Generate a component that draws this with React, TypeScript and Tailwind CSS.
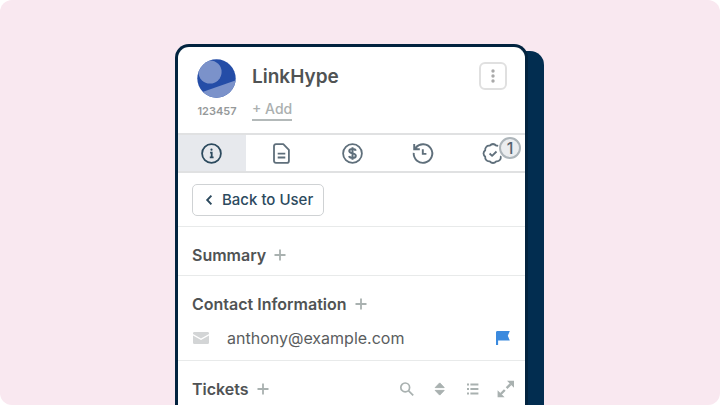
import type { ReactNode } from "react";
import { clsx } from "clsx";

function InfoIcon() {
  return (
    <svg viewBox="0 0 24 24" className="size-6" fill="none" stroke="currentColor" strokeWidth="1.8" aria-hidden="true">
      <circle cx="11.5" cy="12.5" r="9.4" />
      <path d="M10.1 11.7h1.6v4.6M9.8 16.3h3.8" />
      <circle cx="11.5" cy="8.7" r="1.1" fill="currentColor" stroke="none" />
    </svg>
  );
}

function DocumentIcon() {
  return (
    <svg viewBox="0 0 24 24" className="size-6" fill="none" stroke="currentColor" strokeWidth="1.8" strokeLinejoin="round" aria-hidden="true">
      <path d="M5.9 3.2h7.4l5.6 5.6v11.1a1.9 1.9 0 0 1-1.9 1.9H5.9A1.9 1.9 0 0 1 4 19.9V5.1a1.9 1.9 0 0 1 1.9-1.9Z" />
      <path d="M7.7 12.7h7.6M7.7 16.5h7.6" />
    </svg>
  );
}

function DollarIcon() {
  return (
    <svg viewBox="0 0 24 24" className="size-6" fill="none" stroke="currentColor" strokeWidth="1.8" aria-hidden="true">
      <circle cx="11.5" cy="12.5" r="9.4" />
      <path d="M14.7 9.7c-.3-1.1-1.5-1.7-3.2-1.7-1.9 0-3.2.8-3.2 2.1 0 3.1 6.5 1.4 6.5 4.6 0 1.4-1.4 2.2-3.3 2.2-1.8 0-3.1-.7-3.4-1.9M11.5 6.3v12.4" strokeWidth="2" />
    </svg>
  );
}

function HistoryIcon() {
  return (
    <svg viewBox="0 0 24 24" className="size-6" fill="none" stroke="currentColor" strokeWidth="1.9" aria-hidden="true">
      <path d="M1.7 11.9A9.3 9.3 0 1 0 3.8 6.6" />
      <path d="M2.2 3.1v5.2h5.6" />
      <path d="M2.2 4.4l4 4H2.2Z" fill="currentColor" stroke="none" />
      <path d="M10.8 8.3v4.6h3.6" />
    </svg>
  );
}

function BadgeCheckIcon() {
  return (
    <svg viewBox="0 0 24 24" className="size-6" fill="none" stroke="currentColor" strokeWidth="1.8" strokeLinejoin="round" aria-hidden="true">
      <g transform="translate(1 .5)">
        <path d="M12 2.5Q13.8 2.6 15.2 4.2Q17.4 3.9 18.7 5.3Q20.1 6.6 19.8 8.8Q21.4 10.2 21.5 12Q21.4 13.8 19.8 15.2Q20.1 17.4 18.7 18.7Q17.4 20.1 15.2 19.8Q13.8 21.4 12 21.5Q10.2 21.4 8.8 19.8Q6.6 20.1 5.3 18.7Q3.9 17.4 4.2 15.2Q2.6 13.8 2.5 12Q2.6 10.2 4.2 8.8Q3.9 6.6 5.3 5.3Q6.6 3.9 8.8 4.2Q10.2 2.6 12 2.5Z" />
        <path d="M8.6 12l2.5 2.4 4.4-4.4" />
      </g>
    </svg>
  );
}

function MailIcon() {
  return (
    <svg viewBox="0 0 18 14" className="h-3.5 w-[18px] text-[#d3d5d6]" fill="currentColor" aria-hidden="true">
      <path d="M2.5 1h13A1.4 1.4 0 0 1 17 2.4v.5L9 7.4 1 2.9v-.5A1.4 1.4 0 0 1 2.5 1Z" />
      <path d="M1 4.4l8 4.5 8-4.5v7.3a1.4 1.4 0 0 1-1.4 1.4H2.4A1.4 1.4 0 0 1 1 11.7Z" />
    </svg>
  );
}

function FlagIcon() {
  return (
    <svg viewBox="0 0 16 16" className="size-4 text-[#3b8ade]" fill="currentColor" aria-hidden="true">
      <path d="M1 2.4C1 1.6 1.6 1 2.4 1h12.4l-2 4.7 2 4.8H3.1V15H1Z" />
    </svg>
  );
}

function SearchIcon() {
  return (
    <svg viewBox="0 0 16 16" className="size-4" fill="none" stroke="currentColor" strokeWidth="1.7" aria-hidden="true">
      <circle cx="7.2" cy="6.4" r="4.4" />
      <path d="M10.4 9.6l4.8 4.8" />
    </svg>
  );
}

function SortIcon() {
  return (
    <svg viewBox="0 0 16 16" className="size-4" fill="currentColor" stroke="currentColor" strokeWidth="1" strokeLinejoin="round" aria-hidden="true">
      <path d="M8.7 1.9l4.5 4.7h-9ZM8.7 14.1l4.5-4.7h-9Z" />
    </svg>
  );
}

function ListIcon() {
  return (
    <svg viewBox="0 0 16 16" className="size-4" stroke="currentColor" strokeWidth="1.9" aria-hidden="true">
      <path d="M3 3.5h2M6.4 3.5h8M3 8h2M6.4 8h8M3 12.5h2M6.4 12.5h8" />
    </svg>
  );
}

function ExpandIcon() {
  return (
    <svg viewBox="0 0 18 18" className="size-[18px]" fill="currentColor" stroke="currentColor" aria-hidden="true">
      <path d="M9.6 8.2l4-4M7.8 10l-4 4" strokeWidth="2.4" />
      <path d="M10 .8h7v7ZM.6 17.2h7l-7-7Z" stroke="none" />
    </svg>
  );
}

const tabs = [
  { label: "Details", icon: <InfoIcon /> },
  { label: "Documents", icon: <DocumentIcon /> },
  { label: "Billing", icon: <DollarIcon /> },
  { label: "History", icon: <HistoryIcon /> },
  { label: "Tasks", icon: <BadgeCheckIcon />, count: 1 },
];

const ticketActions = [
  { label: "Search tickets", icon: <SearchIcon /> },
  { label: "Sort tickets", icon: <SortIcon /> },
  { label: "List view", icon: <ListIcon /> },
  { label: "Expand", icon: <ExpandIcon /> },
];

function SectionHeading({ title, children }: { title: string; children?: ReactNode }) {
  return (
    <div className="flex h-6 items-center gap-2">
      <h2 className="text-[16px] leading-6 font-semibold text-[#505354]">{title}</h2>
      <button type="button" aria-label={`Add to ${title}`} className="text-[#a9b1b0]">
        <svg viewBox="0 0 12 12" className="size-3" stroke="currentColor" strokeWidth="1.8" aria-hidden="true">
          <path d="M6 .5v11M.5 6h11" />
        </svg>
      </button>
      {children}
    </div>
  );
}

function CardHeader() {
  return (
    <header className="flex items-start gap-[15px] pt-3 pr-[18px] pb-3 pl-[19px]">
      <div className="flex w-10 flex-col items-center gap-1">
        <svg viewBox="0 0 40 40" className="size-10" aria-hidden="true">
          <defs>
            <clipPath id="avatar">
              <circle cx="19.5" cy="19.5" r="19.2" />
            </clipPath>
          </defs>
          <g clipPath="url(#avatar)">
            <rect width="40" height="40" fill="#244da7" />
            <circle cx="13" cy="13" r="11.6" fill="#7b92ca" />
            <path d="M4 33.5L40 21v19H4Z" fill="#7b92ca" />
          </g>
        </svg>
        <span className="text-[11px] leading-4 font-semibold text-[#96999a]">123457</span>
      </div>
      <div className="flex flex-1 flex-col items-start gap-2 pt-1">
        <h1 className="text-[19px] leading-7 font-semibold text-[#505354]">LinkHype</h1>
        <button type="button" className="border-b-2 border-[#b3b9b9] text-[14px] leading-5 font-medium text-[#abb0b0]">
          + Add
        </button>
      </div>
      <button
        type="button"
        aria-label="More options"
        className="mt-[3px] flex size-7 items-center justify-center rounded-md border-2 border-[#e0e0e0] text-[#a9a9a9]"
      >
        <svg viewBox="0 0 4 14" className="h-3.5 w-1" fill="currentColor" aria-hidden="true">
          <circle cx="2" cy="2" r="1.7" />
          <circle cx="2" cy="7" r="1.7" />
          <circle cx="2" cy="12" r="1.7" />
        </svg>
      </button>
    </header>
  );
}

export default function App() {
  return (
    <div className="bg-white font-['Inter',sans-serif]">
      <main className="flex h-screen justify-center overflow-hidden rounded-xl bg-[#f9e8f0] pt-11 pr-[17px]">
        <div className="w-full max-w-[353px] rounded-t-[14px] border-3 border-b-0 border-[#02233f] bg-white shadow-[16px_7px_0_0_#022d50]">
          <CardHeader />

          <nav className="grid h-10 grid-cols-[68fr_71fr_71fr_71fr_65fr] border-t-2 border-b-2 border-[#e0e1e2]">
            {tabs.map((tab, index) => (
              <button
                key={tab.label}
                type="button"
                aria-label={tab.label}
                className={clsx(
                  "relative flex items-center justify-center",
                  index === 0 ? "bg-[#e7e9ed] text-[#2c4a5e]" : "text-[#5f6f7b]"
                )}
              >
                {tab.icon}
                {tab.count && (
                  <span className="absolute top-0.5 right-1 flex size-[22px] items-center justify-center rounded-full border-2 border-[#adb5ba] bg-[#ebedef] text-[16px] leading-none font-medium text-[#56646f] ring-1 ring-white">
                    {tab.count}
                  </span>
                )}
              </button>
            ))}
          </nav>

          <div className="border-b border-[#e8eaea] px-3.5 pt-[11px] pb-2.5">
            <button
              type="button"
              className="flex h-8 items-center gap-[7px] rounded-[5px] border border-[#cfd2d4] px-2.5 text-[15px] font-medium text-[#2c4a5e]"
            >
              <svg viewBox="0 0 12 12" className="size-3" fill="none" stroke="currentColor" strokeWidth="1.9" aria-hidden="true">
                <path d="M8.4 1.6L4.2 6l4.2 4.4" />
              </svg>
              Back to User
            </button>
          </div>

          <section className="border-b border-[#e8eaea] px-3.5 pt-4 pb-2">
            <SectionHeading title="Summary" />
          </section>

          <section className="flex flex-col gap-2.5 border-b border-[#e8eaea] px-3.5 pt-4 pb-2.5">
            <SectionHeading title="Contact Information" />
            <div className="flex h-6 items-center">
              <MailIcon />
              <span className="ml-[17px] flex-1 text-[16px] text-[#5a5d5e]">anthony@example.com</span>
              <button type="button" aria-label="Flag contact">
                <FlagIcon />
              </button>
            </div>
          </section>

          <section className="px-3.5 pt-4">
            <SectionHeading title="Tickets">
              <div className="-mr-1 flex flex-1 items-center justify-end gap-[17px] text-[#a9b1b0]">
                {ticketActions.map((action) => (
                  <button key={action.label} type="button" aria-label={action.label}>
                    {action.icon}
                  </button>
                ))}
              </div>
            </SectionHeading>
          </section>
        </div>
      </main>
    </div>
  );
}
